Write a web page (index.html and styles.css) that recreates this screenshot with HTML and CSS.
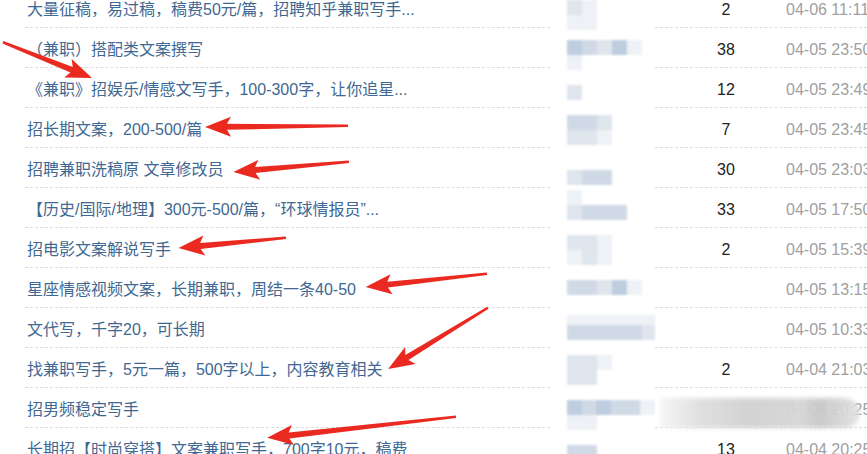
FILE: index.html
```html
<!DOCTYPE html>
<html lang="zh-CN">
<head>
  <meta charset="UTF-8" />
  <meta name="viewport" content="width=device-width, initial-scale=1.0"/>
  <title>兼职列表</title>
  <link rel="stylesheet" href="styles.css">
</head>
<body>
  <div class="list">
    <div class="row">
      <div class="title">大量征稿，易过稿，稿费50元/篇，招聘知乎兼职写手...</div>
      <div class="user">
        <div class="line"><span class="px s2"></span><span class="px s1"></span></div>
        <div class="line"><span class="px s1"></span><span class="px s1"></span></div>
      </div>
      <div class="meta"><span class="num">2</span><span class="date">04-06 11:11</span></div>
    </div>
    <div class="row">
      <div class="title">（兼职）搭配类文案撰写</div>
      <div class="user">
        <div class="line"><span class="px s4"></span><span class="px s3"></span><span class="px s2"></span><span class="px s4"></span><span class="px s1"></span></div>
        <div class="line"><span class="px s1"></span></div>
      </div>
      <div class="meta"><span class="num">38</span><span class="date">04-05 23:50</span></div>
    </div>
    <div class="row">
      <div class="title">《兼职》招娱乐/情感文写手，100-300字，让你追星...</div>
      <div class="user lo">
        <div class="line"><span class="px s2"></span></div>
      </div>
      <div class="meta"><span class="num">12</span><span class="date">04-05 23:49</span></div>
    </div>
    <div class="row">
      <div class="title">招长期文案，200-500/篇</div>
      <div class="user hi">
        <div class="line"><span class="px s3"></span><span class="px s3"></span><span class="px s2"></span></div>
        <div class="line"><span class="px s2"></span><span class="px s2"></span><span class="px s1"></span></div>
      </div>
      <div class="meta"><span class="num">7</span><span class="date">04-05 23:45</span></div>
    </div>
    <div class="row">
      <div class="title">招聘兼职洗稿原 文章修改员</div>
      <div class="user low">
        <div class="line"><span class="px s2"></span><span class="px s3"></span><span class="px s3"></span></div>
      </div>
      <div class="meta"><span class="num">30</span><span class="date">04-05 23:03</span></div>
    </div>
    <div class="row">
      <div class="title">【历史/国际/地理】300元-500/篇，“环球情报员”...</div>
      <div class="user top">
        <div class="line"><span class="px s1"></span></div>
        <div class="line"><span class="px s2"></span><span class="px s3"></span><span class="px s3"></span><span class="px s3"></span></div>
      </div>
      <div class="meta"><span class="num">33</span><span class="date">04-05 17:50</span></div>
    </div>
    <div class="row">
      <div class="title">招电影文案解说写手</div>
      <div class="user hi">
        <div class="line"><span class="px s2"></span><span class="px s2"></span><span class="px s1"></span></div>
        <div class="line"><span class="px s1"></span><span class="px s2"></span><span class="px s1"></span></div>
      </div>
      <div class="meta"><span class="num">2</span><span class="date">04-05 15:39</span></div>
    </div>
    <div class="row">
      <div class="title">星座情感视频文案，长期兼职，周结一条40-50</div>
      <div class="user">
        <div class="line"><span class="px s3"></span><span class="px s3"></span><span class="px s2"></span><span class="px s4"></span><span class="px s1"></span></div>
      </div>
      <div class="meta"><span class="num"></span><span class="date">04-05 13:15</span></div>
    </div>
    <div class="row">
      <div class="title">文代写，千字20，可长期</div>
      <div class="user hi">
        <div class="line thin"><span class="px s1"></span><span class="px s1"></span><span class="px s1"></span><span class="px s1"></span><span class="px s1"></span><span class="px s1"></span><span class="px s1"></span></div>
        <div class="line"><span class="px s3"></span><span class="px s3"></span><span class="px s3"></span><span class="px s3"></span><span class="px s3"></span><span class="px s3"></span><span class="px s2"></span></div>
      </div>
      <div class="meta"><span class="num"></span><span class="date">04-05 10:33</span></div>
    </div>
    <div class="row">
      <div class="title">找兼职写手，5元一篇，500字以上，内容教育相关</div>
      <div class="user hi">
        <div class="line"><span class="px s2"></span><span class="px s2"></span><span class="px s1"></span></div>
        <div class="line"><span class="px s2"></span><span class="px s2"></span></div>
      </div>
      <div class="meta"><span class="num">2</span><span class="date">04-04 21:03</span></div>
    </div>
    <div class="row">
      <div class="title">招男频稳定写手</div>
      <div class="user">
        <div class="line"><span class="px s4"></span><span class="px s3"></span><span class="px s4"></span><span class="px s3"></span><span class="px s3"></span><span class="px s1"></span></div>
        <div class="line"><span class="px s1"></span><span class="px s1"></span></div>
      </div>
      <div class="meta"><span class="num"></span><span class="date">04-04 20:25</span></div>
      <div class="smear"></div>
    </div>
    <div class="row">
      <div class="title">长期招【时尚穿搭】文案兼职写手，700字10元，稿费</div>
      <div class="user lo">
        <div class="line"><span class="px s3"></span><span class="px s3"></span></div>
      </div>
      <div class="meta"><span class="num">13</span><span class="date">04-04 20:25</span></div>
    </div>
  </div>

  <!-- red annotation arrows drawn over the list -->
  <svg class="arrows" width="867" height="454" viewBox="0 0 867 454">
    <g fill="#ea2a20">
      <polygon transform="translate(3 42) rotate(22)" points="0,-1 74,-3 70,-10 96,0 70,10 74,3 0,1.5"/>
      <polygon transform="translate(348 126) rotate(179.6)" points="0,-1 121,-3 117,-10 143,0 117,10 121,3 0,1.5"/>
      <polygon transform="translate(349 162) rotate(175.1)" points="0,-1 94,-3 90,-10 116,0 90,10 94,3 0,1.5"/>
      <polygon transform="translate(286 238) rotate(174.7)" points="0,-1 86,-3 82,-10 108,0 82,10 86,3 0,1.5"/>
      <polygon transform="translate(487 274) rotate(173.9)" points="0,-1 100,-3 96,-10 122,0 96,10 100,3 0,1.5"/>
      <polygon transform="translate(488 308) rotate(148.6)" points="0,-1 95,-3 91,-10 117,0 91,10 95,3 0,1.5"/>
      <polygon transform="translate(456 417) rotate(173.7)" points="0,-1 168,-3 164,-10 190,0 164,10 168,3 0,1.5"/>
    </g>
  </svg>
</body>
</html>
```

FILE: styles.css
```css
body {
  margin: 0;
  background: #fff;
  font-family: "Liberation Sans", "Noto Sans CJK SC", sans-serif;
  font-size: 16px;
  overflow: hidden;
  position: relative;
}
.list {
  margin-top: -12px;
}
.row {
  display: flex;
  height: 40px;
  position: relative;
}
.title {
  flex-shrink: 0;
  margin-left: 25px;
  width: 525px;
  padding-left: 2px;
  box-sizing: border-box;
  border-bottom: 1px dashed #dcdcdc;
  color: #3f6892;
  line-height: 44px;
  white-space: nowrap;
  overflow: hidden;
}
.user {
  flex-shrink: 0;
  width: 105px;
  padding-left: 17px;
  padding-top: 12px;
  box-sizing: border-box;
  filter: blur(0.8px);
}
.user.lo { padding-top: 17px; }
.user.low { padding-top: 22px; }
.user.hi { padding-top: 7px; }
.user.top { padding-top: 2px; }
.line {
  display: flex;
  height: 15px;
}
.line.thin { height: 10px; }
.px {
  width: 15px;
  height: 100%;
}
.s1 { background: #eef1f5; }
.s2 { background: #dfe5ed; }
.s3 { background: #d0dae6; }
.s4 { background: #bfcde0; }
.meta {
  flex: 1;
  min-width: 0;
  display: flex;
  padding-left: 15px;
  border-bottom: 1px dashed #dcdcdc;
  line-height: 44px;
  white-space: nowrap;
  overflow: hidden;
}
.num {
  flex-shrink: 0;
  width: 112px;
  text-align: center;
  color: #222;
}
.date {
  padding-left: 4px;
  color: #a0a0a0;
}
.smear {
  position: absolute;
  left: 660px;
  top: 10px;
  width: 200px;
  height: 30px;
  border-radius: 4px 18px 18px 4px;
  background: linear-gradient(90deg, rgba(245,245,245,0.9) 0%, rgba(222,222,222,0.95) 20%, rgba(208,208,208,0.95) 45%, rgba(214,214,214,0.95) 70%, rgba(200,200,200,0.95) 80%, rgba(225,225,225,0.9) 100%);
  filter: blur(2px);
}
.arrows {
  position: absolute;
  left: 0;
  top: 0;
  pointer-events: none;
}
```
